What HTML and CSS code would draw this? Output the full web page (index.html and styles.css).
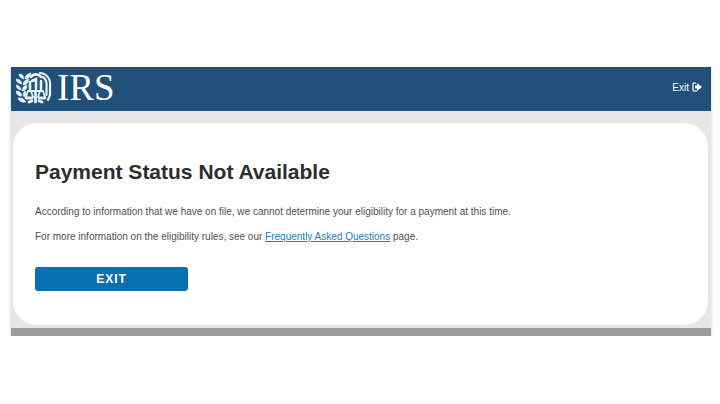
FILE: index.html
```html
<!DOCTYPE html>
<html lang="en">
<head>
    <meta charset="UTF-8">
    <meta name="viewport" content="width=device-width, initial-scale=1.0">
    <title>Payment Status Not Available</title>
    <link rel="stylesheet" href="styles.css">
</head>
<body>
    <div class="container">
        <header class="header">
            <div class="logo">
                <svg class="emblem" viewBox="0 0 36 34" aria-hidden="true">
                    <!-- olive branch -->
                    <g fill="#e8f3fa" stroke="#e8f3fa" stroke-width="0.6">
                        <path d="M8 8Q3 7 3 3Q8 3 8 8ZM6 13Q0 12 0 8Q5 8 6 13ZM5 19Q0 18 0 14Q4 14 5 19ZM6 25Q0 25 0 20Q5 20 6 25ZM10 31Q3 32 2 27Q7 26 10 31Z"/>
                        <path d="M9 8Q9 3 15 2Q14 8 9 8ZM7 14Q7 9 13 8Q12 14 7 14ZM6 20Q6 15 11 14Q11 20 6 20ZM8 26Q6 22 9 20Q12 23 8 26Z"/>
                    </g>
                    <!-- eagle and scales -->
                    <g fill="none" stroke="#e8f3fa" stroke-linecap="round">
                        <path d="M15 6C18 2 23 3 25 6M16 10L20 8V18M14 11V18M25 10V18" stroke-width="2.6"/>
                        <path d="M12 20H27M12 20L10 26M15 20L17 26M24 20L22 26M27 20L29 26" stroke-width="1.8"/>
                        <path d="M10 27H16M23 27H29M13 31L16 30M19.5 22V31M23 30L26 31" stroke-width="2.8"/>
                        <path d="M24 2C31 3 35 8 34 16V24L32 29M27 6C30 8 31 12 30.500 17V24" stroke-width="2.2"/>
                    </g>
                </svg>
                <span class="logo-text">IRS</span>
            </div>
            <a class="exit-link" href="#">Exit
                <svg class="exit-icon" viewBox="0 0 10 10" aria-hidden="true">
                    <path d="M4 1H2Q1 1 1 2V8Q1 9 2 9H5" fill="none" stroke="#c5d9e7" stroke-width="1.6"/>
                    <path d="M3 3.500H5V1L10 5L5 9V6.500H3Z" fill="#fff"/>
                </svg>
            </a>
        </header>
        <main class="content">
            <div class="card">
                <h1>Payment Status Not Available</h1>
                <p>According to information that we have on file, we cannot determine your eligibility for a payment at this time.</p>
                <p>For more information on the eligibility rules, see our <a href="#">Frequently Asked Questions</a> page.</p>
                <button class="exit-button" type="button">EXIT</button>
            </div>
        </main>
        <div class="bottom-bar"></div>
    </div>
</body>
</html>
```
FILE: styles.css
```css
body {
    background-color: #fff;
    color: #505050;
    font-family: "Liberation Sans", Arial, sans-serif;
    font-size: 10px;
    margin: 0;
    padding: 67px 9px 0 11px;
}

.container {
    background-color: #e6e6e6;
    box-shadow: 0 1px 3px rgba(0, 0, 0, 0.2);
}

.header {
    background-color: #215079;
    display: flex;
    justify-content: space-between;
    align-items: center;
    padding: 0 9px 2px 5px;
}

.logo {
    display: flex;
    align-items: center;
    gap: 5px;
}

.emblem {
    width: 36px;
    height: 34px;
}

.logo-text {
    color: #fff;
    font-family: "Liberation Serif", "Times New Roman", serif;
    font-size: 37px;
    line-height: 42px;
}

.exit-link {
    color: #fff;
    display: flex;
    align-items: center;
    gap: 3px;
    padding-bottom: 2px;
    text-decoration: none;
}

.exit-icon {
    width: 10px;
    height: 10px;
}

.content {
    padding: 12px 3px 3px 2px;
}

.card {
    background-color: #fff;
    border-radius: 24px;
    padding: 36px 22px 34px;
}

h1 {
    color: #2d2d2d;
    font-size: 21px;
    line-height: 26px;
    margin: 0 0 19px;
}

p {
    line-height: 15px;
    margin: 0 0 10px;
}

p a {
    color: #2380b5;
}

.exit-button {
    background-color: #0871b1;
    border: none;
    border-radius: 3px;
    color: #fff;
    cursor: pointer;
    display: block;
    font-family: inherit;
    font-size: 12px;
    font-weight: bold;
    letter-spacing: 1px;
    height: 24px;
    margin-top: 23px;
    padding: 0;
    width: 153px;
}

.bottom-bar {
    background-color: #9b9b9b;
    height: 8px;
}
```
